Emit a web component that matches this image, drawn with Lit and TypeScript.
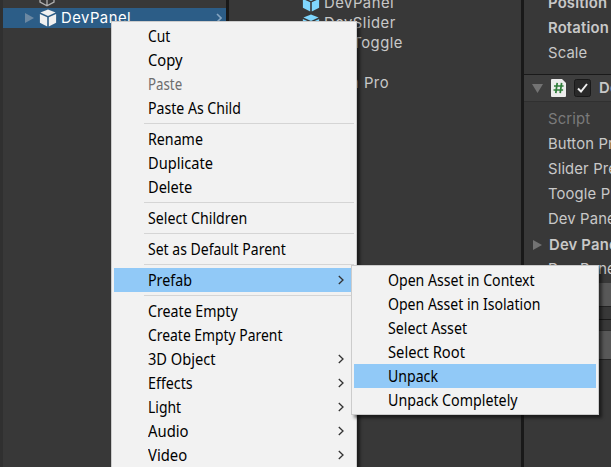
import { LitElement, html, css, svg, nothing } from "lit";
import { customElement, property } from "lit/decorators.js";

type Entry = { label: string; width: number; sub?: boolean; off?: boolean; hot?: boolean } | null;

const MAIN: Entry[] = [
  { label: "Cut", width: 22 },
  { label: "Copy", width: 34 },
  { label: "Paste", width: 34, off: true },
  { label: "Paste As Child", width: 92 },
  null,
  { label: "Rename", width: 54 },
  { label: "Duplicate", width: 64 },
  { label: "Delete", width: 44 },
  null,
  { label: "Select Children", width: 99 },
  null,
  { label: "Set as Default Parent", width: 137 },
  null,
  { label: "Prefab", width: 43, sub: true, hot: true },
  null,
  { label: "Create Empty", width: 89 },
  { label: "Create Empty Parent", width: 134 },
  { label: "3D Object", width: 67, sub: true },
  { label: "Effects", width: 44, sub: true },
  { label: "Light", width: 33, sub: true },
  { label: "Audio", width: 40, sub: true },
  { label: "Video", width: 39, sub: true },
];

const PREFAB: Entry[] = [
  { label: "Open Asset in Context", width: 146 },
  { label: "Open Asset in Isolation", width: 152 },
  { label: "Select Asset", width: 79 },
  { label: "Select Root", width: 76 },
  { label: "Unpack", width: 49, hot: true },
  { label: "Unpack Completely", width: 129 },
];

const cube = (kind: string) => html`<svg class="cube" viewBox="0 0 18 18">
  ${kind === "outline"
    ? svg`<path d="M9 1.5 16 4.8V13L9 16.7 2 13V4.8Z M2 4.8 9 8.2 16 4.8 M9 8.2V16.7" fill="none" stroke="#b0b0b0" stroke-width="1.3"/>`
    : svg`<g fill=${kind}><path d="M9 .4 16.6 3.6 9 7 1.4 3.6Z"/><path d="M.9 4.9 8.2 8.2V17.4L.9 13.8Z"/><path d="M17.1 4.9 9.8 8.2V17.4L17.1 13.8Z"/></g>`}
</svg>`;

@customElement("context-menu")
export class ContextMenu extends LitElement {
  @property({ attribute: false }) entries: Entry[] = [];

  static styles = css`
    :host {
      display: block;
      box-sizing: border-box;
      border: 1px solid #ccc;
      padding: 2px;
      background: #f2f2f2;
      color: #000;
      font: 15.4px/24px "Noto Sans", sans-serif;
      box-shadow: 3px 3px 3px rgba(0, 0, 0, 0.5);
    }
    .row {
      display: flex;
      align-items: center;
      box-sizing: border-box;
      height: 24px;
      padding: 2px 10px 0 34px;
      justify-content: space-between;
    }
    .hot { background: #91c9f7; }
    .off { color: #6d6d6d; }
    .label {
      white-space: nowrap;
      transform-origin: 0 50%;
    }
    .sep { padding: 3px 0 3px 30px; }
    .line { height: 1px; background: #d5d5d5; }
    .arrow { width: 6px; height: 10px; margin-top: -2px; flex: none; }
  `;

  firstUpdated() {
    const labels = this.renderRoot.querySelectorAll<HTMLElement>(".label");
    labels.forEach((el) => {
      const want = Number(el.dataset.width);
      el.style.transform = `scaleX(${(want + 0.5) / el.offsetWidth})`;
    });
  }

  render() {
    return this.entries.map((e) =>
      e === null
        ? html`<div class="sep"><div class="line"></div></div>`
        : html`<div class="row ${e.hot ? "hot" : ""} ${e.off ? "off" : ""}">
            <span class="label" data-width=${e.width}>${e.label}</span>
            ${e.sub
              ? html`<svg class="arrow" viewBox="0 0 6 10"><path d="M.8 1 5 5 .8 9" fill="none" stroke="#333" stroke-width="1.3"/></svg>`
              : nothing}
          </div>`
    );
  }
}

@customElement("app-root")
export class AppRoot extends LitElement {
  static styles = css`
    :host {
      display: block;
      position: relative;
      width: 611px;
      height: 467px;
      overflow: hidden;
      background: #383838;
      color: #c8c8c8;
      font: 14.8px/20px Inter, sans-serif;
      letter-spacing: 0.5px;
      white-space: nowrap;
    }
    .editor {
      display: grid;
      grid-template-columns: 226px 292px 87px;
      gap: 3px;
      height: 467px;
      background: #191919;
    }
    .pane { background: #383838; overflow: hidden; }
    .hierarchy { border-left: 3px solid #303030; box-sizing: border-box; }
    svg { flex: none; }
    .cube { width: 18px; height: 18px; }
    .node { display: flex; align-items: center; height: 20px; padding-left: 35px; gap: 4px; }
    .first { margin-top: -12px; }
    .chosen {
      background: #2c5d87;
      color: #fff;
      padding-left: 22px;
      margin-left: -3px;
      border-left: 3px solid #35507c;
      padding-right: 4px;
    }
    .chosen .cube { margin-left: 1px; }
    .fold { width: 9px; height: 10px; }
    .grow { flex: 1; }
    .open { width: 6px; height: 10px; }
    .asset { display: flex; align-items: center; height: 20px; gap: 4px; padding-left: 73px; }
    .lead { margin-top: -7px; }
    .tail { margin-top: 20px; padding-left: 121px; }
    .prop { height: 25px; line-height: 25px; padding-left: 24px; letter-spacing: 0.15px; }
    .top { margin-top: -9px; }
    .strong { font-weight: 600; letter-spacing: 0.2px; }
    .dim { color: #7b7b7b; }
    .header {
      display: flex;
      align-items: center;
      box-sizing: border-box;
      height: 28px;
      margin-top: 8px;
      border-top: 1px solid #1a1a1a;
      border-bottom: 1px solid #303030;
      background: #3e3e3e;
      padding-left: 8px;
      margin-bottom: 5px;
    }
    .badge { width: 15px; height: 18px; margin: 0 8px; }
    .tick { width: 17px; height: 18px; margin-right: 8px; }
    .group { display: flex; align-items: center; height: 25px; padding-left: 9px; gap: 7px; }
    .button { height: 23px; margin: 1px 0 0 10px; background: #585858; border-bottom: 1px solid #242424; }
    .rule { height: 1px; margin: 12px 0 10px; background: #1a1a1a; }
    .action { height: 28px; margin-left: 10px; background: #585858; border-top: 1px solid #303030; border-bottom: 1px solid #242424; }
    .menu { position: absolute; left: 111px; top: 21px; width: 246px; height: 470px; }
    .submenu { position: absolute; left: 351px; top: 265px; width: 248px; }
    context-menu { letter-spacing: 0; }
  `;

  render() {
    return html`
      <div class="editor">
        <div class="pane hierarchy">
          <div class="node first">${cube("outline")}</div>
          <div class="node chosen">
            <svg class="fold" viewBox="0 0 9 10"><path d="M0 0 9 5 0 10Z" fill="#6c88a2"/></svg>
            ${cube("#f0f0f0")}
            <span>DevPanel</span>
            <span class="grow"></span>
            <svg class="open" viewBox="0 0 6 10"><path d="M1 1 5 5 1 9" fill="none" stroke="#86a6c2" stroke-width="1.6"/></svg>
          </div>
        </div>
        <div class="pane">
          <div class="asset lead">${cube("#7fd6fd")}<span>DevPanel</span></div>
          <div class="asset">${cube("#7fd6fd")}<span>DevSlider</span></div>
          <div class="asset">${cube("#7fd6fd")}<span>DevToggle</span></div>
          <div class="asset tail">n Pro</div>
        </div>
        <div class="pane">
          <div class="prop top strong">Position</div>
          <div class="prop strong">Rotation</div>
          <div class="prop">Scale</div>
          <div class="header">
            <svg width="11" height="9" viewBox="0 0 11 9"><path d="M0 0H11L5.5 9Z" fill="#737373"/></svg>
            <svg class="badge" viewBox="0 0 15 18"><path d="M1 0H11L15 4V17Q15 18 14 18H1Q0 18 0 17V1Q0 0 1 0Z" fill="#ededed"/><path d="M6.2 3.8 4.8 14.2 M10.6 3.8 9.2 14.2 M3 7H12.6 M2.5 11H12.1" stroke="#2f7d3a" stroke-width="1.7" fill="none"/></svg>
            <svg class="tick" viewBox="0 0 17 18"><rect x=".5" y=".5" width="16" height="17" rx="2" fill="#292929" stroke="#191919"/><path d="M4 9.5 7 12.5 13 5" fill="none" stroke="#f0f0f0" stroke-width="2"/></svg>
            <span class="strong">DevMenu</span>
          </div>
          <div class="prop dim">Script</div>
          <div class="prop">Button Prefab</div>
          <div class="prop">Slider Prefab</div>
          <div class="prop">Toogle Prefab</div>
          <div class="prop">Dev Panel</div>
          <div class="group">
            <svg class="fold" viewBox="0 0 9 10"><path d="M0 0 9 5 0 10Z" fill="#737373"/></svg>
            <span class="strong">Dev Panels</span>
          </div>
          <div class="prop">Dev Panel</div>
          <div class="button"></div>
          <div class="rule"></div>
          <div class="action"></div>
        </div>
      </div>
      <context-menu class="menu" .entries=${MAIN}></context-menu>
      <context-menu class="submenu" .entries=${PREFAB}></context-menu>
    `;
  }
}
